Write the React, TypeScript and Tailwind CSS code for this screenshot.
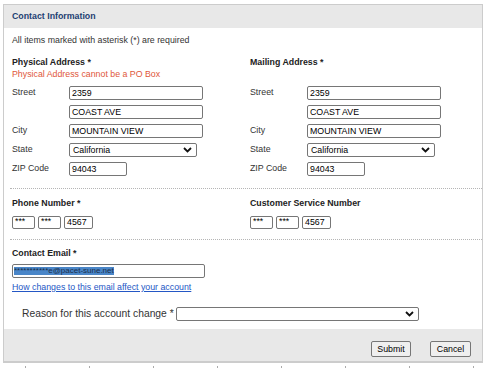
import type { ReactNode } from 'react';

function Chevron() {
  return (
    <svg width="9" height="6" viewBox="0 0 9 6" className="shrink-0">
      <polyline points="1,1 4.5,4.5 8,1" fill="none" stroke="#111" strokeWidth="1.8" />
    </svg>
  );
}

function Field({ value, w = 'w-[134px]' }: { value: string; w?: string }) {
  return (
    <div className={`${w} h-[14px] border border-[#767676] rounded-[2px] px-[2px] flex items-center text-black leading-none`}>
      {value}
    </div>
  );
}

function Select({ value, w }: { value: string; w: string }) {
  return (
    <div className={`${w} h-[14px] border border-[#767676] rounded-[2px] pl-[3px] pr-[4px] flex items-center justify-between text-black leading-none`}>
      <span>{value}</span>
      <Chevron />
    </div>
  );
}

function Row({ label, children }: { label?: string; children: ReactNode }) {
  return (
    <div className="flex items-center h-[14px]">
      <span className="w-[57px] shrink-0 text-[#333]">{label}</span>
      {children}
    </div>
  );
}

function Address({ title, error }: { title: string; error?: string }) {
  return (
    <div>
      <div className="h-[29px]">
        <p className="font-bold text-[#222] leading-[11px]">{title}</p>
        {error && <p className="text-[#e0573a] leading-[11px] mt-[1px]">{error}</p>}
      </div>
      <div className="flex flex-col gap-[5px]">
        <Row label="Street">
          <Field value="2359" />
        </Row>
        <Row>
          <Field value="COAST AVE" />
        </Row>
        <Row label="City">
          <Field value="MOUNTAIN VIEW" />
        </Row>
        <Row label="State">
          <Select value="California" w="w-[128px]" />
        </Row>
        <Row label="ZIP Code">
          <Field value="94043" w="w-[58px]" />
        </Row>
      </div>
    </div>
  );
}

function Phone({ title }: { title: string }) {
  return (
    <div>
      <p className="font-bold text-[#222] leading-[11px]">{title}</p>
      <div className="flex gap-[3px] mt-[7px]">
        <div className="w-[23px] h-[13px] border border-[#767676] rounded-[2px] px-[2px] text-black leading-[9px]">***</div>
        <div className="w-[23px] h-[13px] border border-[#767676] rounded-[2px] px-[2px] text-black leading-[9px]">***</div>
        <div className="w-[29px] h-[13px] border border-[#767676] rounded-[2px] px-[2px] text-black leading-[11px]">4567</div>
      </div>
    </div>
  );
}

export default function App() {
  const ticks = [0, 1, 2, 3, 4, 5, 6, 7];
  return (
    <div className="w-[486px] h-[368px] overflow-hidden bg-white font-['Liberation_Sans',Arial,sans-serif] text-[8.8px] text-[#333]">
      <div className="ml-[3px] mt-[4px] w-[480px] border border-b-2 border-[#cccccc]">
        <div className="h-[23px] bg-[#e8e8e8] flex items-center pl-[8px] font-bold text-[#1d3f73]">
          Contact Information
        </div>

        <div className="px-[8px] pt-[7px] pb-[12px]">
          <p className="leading-[11px]">All items marked with asterisk (*) are required</p>
          <div className="grid grid-cols-[238px_1fr] mt-[11px]">
            <Address title="Physical Address *" error="Physical Address cannot be a PO Box" />
            <Address title="Mailing Address *" />
          </div>
        </div>

        <div className="ml-[6px] border-t border-dotted border-[#b5b5b5]" />
        <div className="px-[8px] pt-[9px] pb-[10px] grid grid-cols-[238px_1fr]">
          <Phone title="Phone Number *" />
          <Phone title="Customer Service Number" />
        </div>

        <div className="ml-[6px] border-t border-dotted border-[#b5b5b5]" />
        <div className="px-[8px] pt-[8px] pb-[8px]">
          <p className="font-bold text-[#222] leading-[11px]">Contact Email *</p>
          <div className="mt-[5px] w-[193px] h-[14px] border border-[#767676] rounded-[2px] px-[1px] flex items-center">
            <span className="bg-[#4a86c8] text-[#1b2f4a] text-[8px] leading-[8px] whitespace-nowrap">
              ***********e@pacet-sune.net
            </span>
          </div>
          <a href="#" className="block mt-[4px] leading-[11px] text-[#2457c5] underline">
            How changes to this email affect your account
          </a>
          <div className="flex items-center mt-[13px] ml-[10px]">
            <span className="text-[10.3px] text-[#333] mr-[2px]">Reason for this account change *</span>
            <Select value="" w="w-[243px] h-[13px]" />
          </div>
        </div>

        <div className="h-[32px] bg-[#e8e8e8] flex items-start justify-end pt-[12px] pr-[11px] gap-[19px]">
          <button className="w-[40px] h-[16px] bg-[#efefef] border border-[#767676] rounded-[2px] text-black leading-none">
            Submit
          </button>
          <button className="w-[41px] h-[16px] bg-[#efefef] border border-[#767676] rounded-[2px] text-black leading-none">
            Cancel
          </button>
        </div>
      </div>
      <div className="flex pl-[25px] gap-[63px] mt-[3px]">
        {ticks.map((t) => (
          <div key={t} className="w-[1px] h-[4px] bg-[#aaaaaa]" />
        ))}
      </div>
    </div>
  );
}
